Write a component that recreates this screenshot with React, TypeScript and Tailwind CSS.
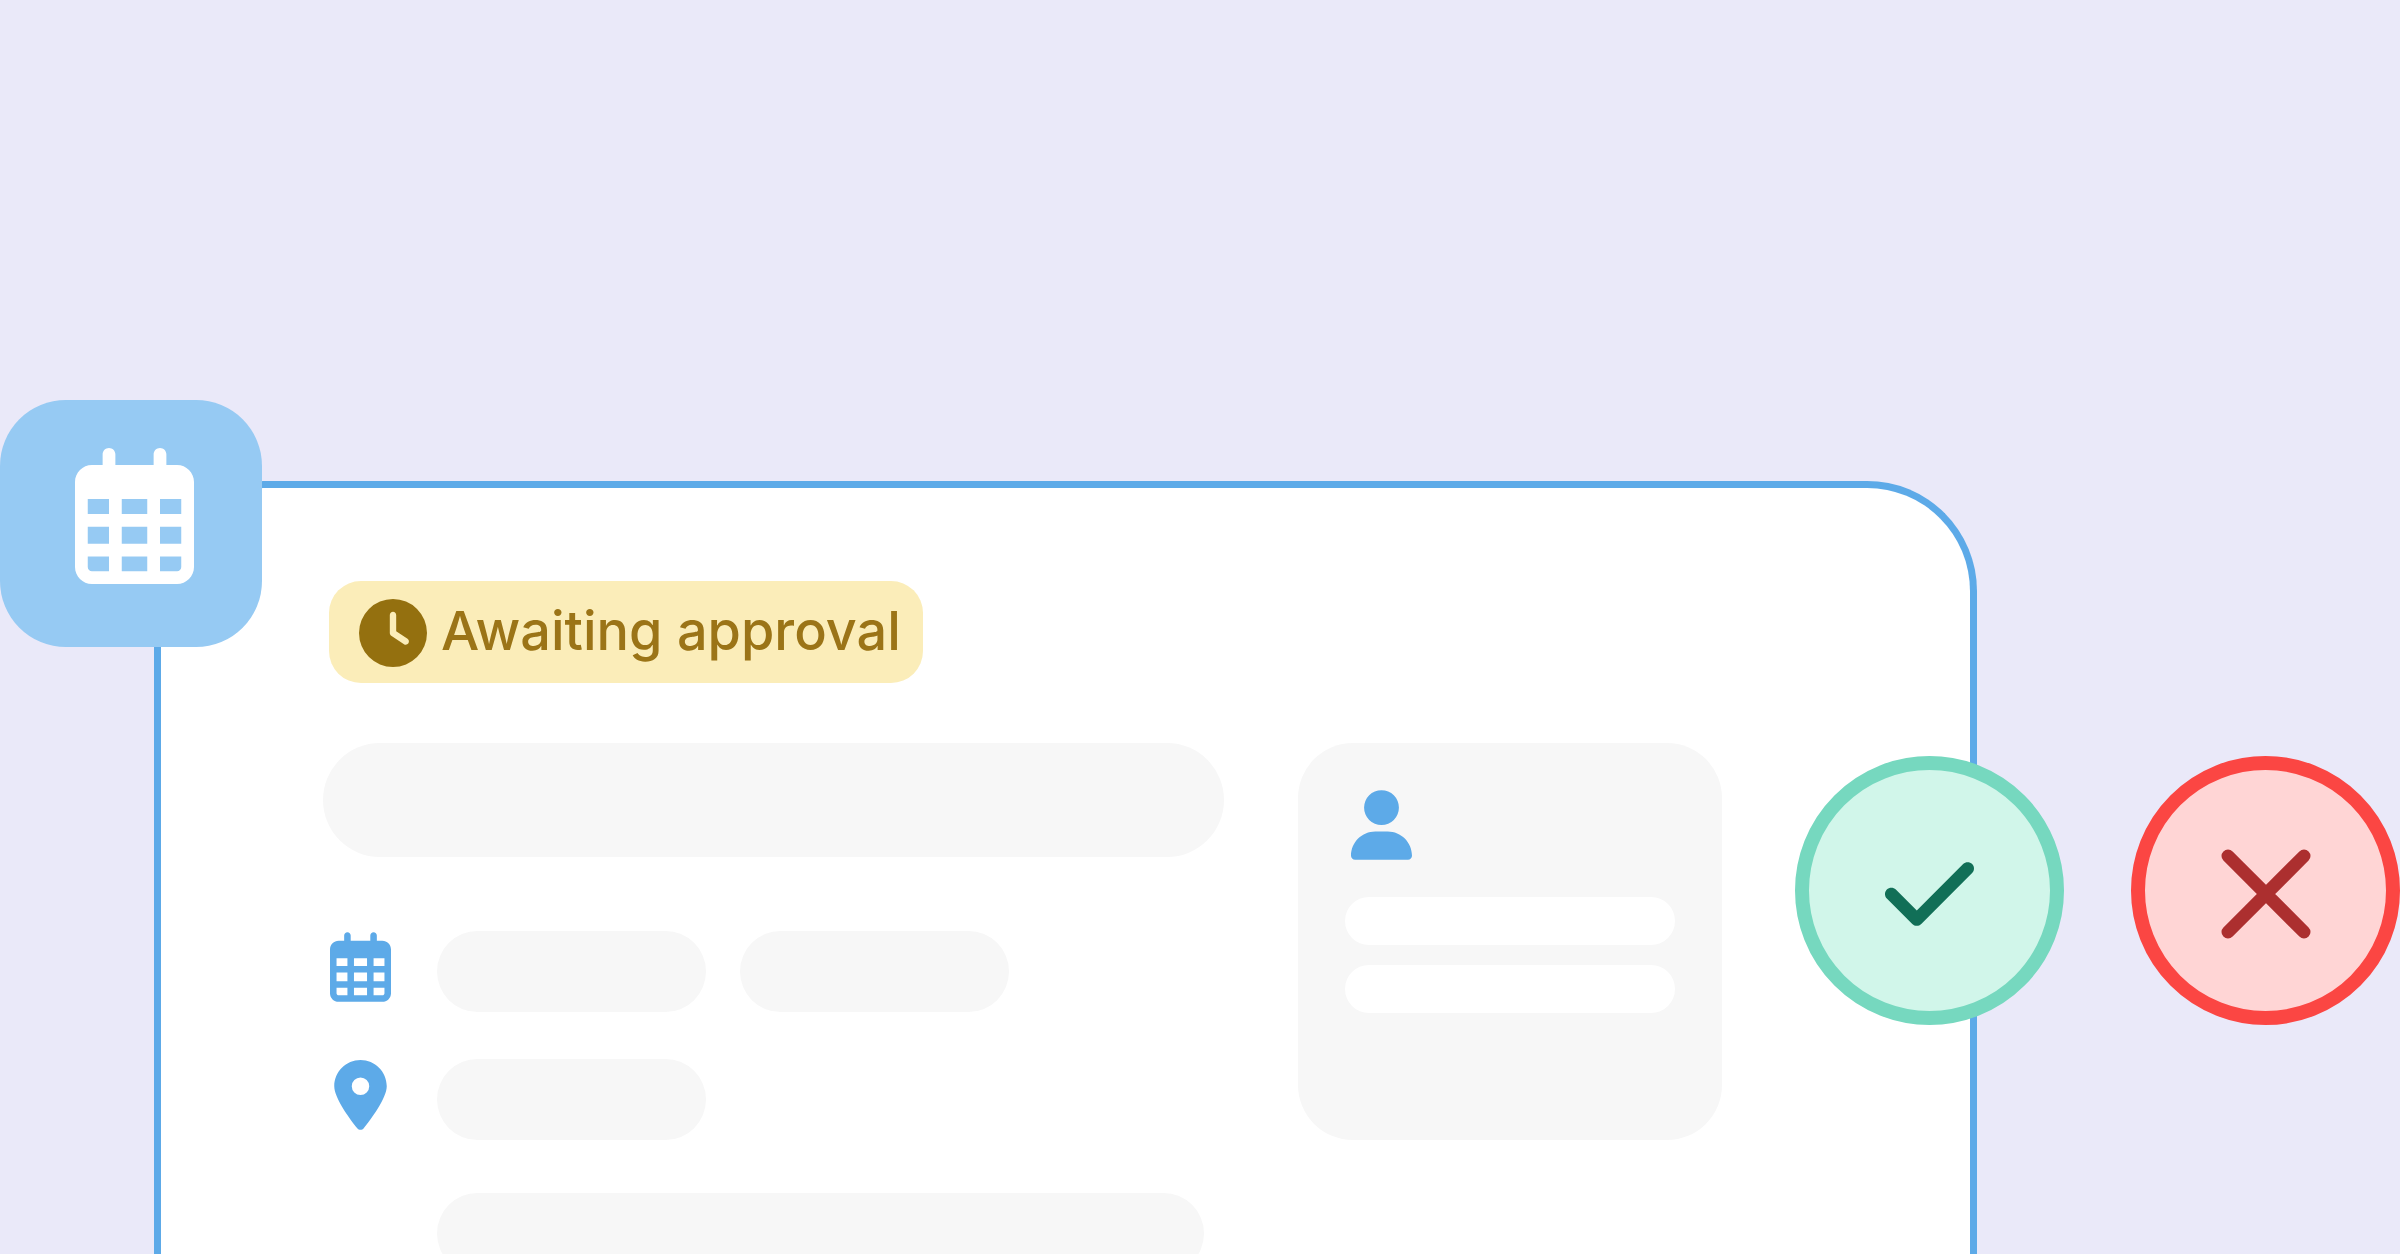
import { FaCheck, FaClock, FaLocationDot, FaRegCalendarDays, FaUser } from 'react-icons/fa6';

const details = [
  {
    label: 'Date',
    icon: FaRegCalendarDays,
    pills: ['w-[269px]', 'w-[269px]'],
  },
  {
    label: 'Location',
    icon: FaLocationDot,
    pills: ['w-[269px]'],
  },
];

function CloseIcon() {
  return (
    <svg
      viewBox="0 0 92 92"
      className="size-[92px]"
      fill="none"
      stroke="currentColor"
      strokeWidth="13"
      strokeLinecap="round"
      aria-hidden="true"
    >
      <path d="M8 8L84 84M84 8L8 84" />
    </svg>
  );
}

function StatusBadge() {
  return (
    <div className="ml-1.5 inline-flex h-[102px] items-center gap-3.5 rounded-[32px] bg-[#fbedb9] pt-0.5 pr-[22px] pl-[30px]">
      <FaClock className="size-[68px] text-[#94700f]" />
      <span className="pb-1 text-[54px] leading-[68px] font-medium whitespace-nowrap text-[#9b7417]">
        Awaiting approval
      </span>
    </div>
  );
}

function PersonCard() {
  return (
    <aside className="h-[397px] w-[424px] shrink-0 rounded-[55px] bg-[#f7f7f7] px-[47px] pt-[47px]">
      <FaUser className="ml-1.5 h-[70px] w-[61px] text-[#5daae8]" />
      <div className="mt-[37px] flex flex-col gap-5">
        <div className="h-12 rounded-full bg-white"></div>
        <div className="h-12 rounded-full bg-white"></div>
      </div>
    </aside>
  );
}

export default function App() {
  return (
    <main className="relative flex h-screen flex-col overflow-hidden bg-[#eae9f9] pt-[481px] pr-[423px] pl-[154px] font-[Inter,sans-serif]">
      <section className="flex-1 rounded-t-[110px] border-[7px] border-b-0 border-[#5daae8] bg-white pt-[93px] pr-[248px] pl-[162px]">
        <StatusBadge />

        <div className="mt-[60px] flex gap-[74px]">
          <div className="flex-1">
            <div className="h-[114px] rounded-full bg-[#f7f7f7]"></div>

            <div className="mt-[74px] flex flex-col gap-[47px]">
              {details.map((detail) => (
                <div key={detail.label} className="flex h-[81px]">
                  <div className="flex w-[114px] shrink-0 pt-px pl-[7px]">
                    <detail.icon className="h-[70px] w-[61px] text-[#5daae8]" />
                  </div>
                  <div className="flex gap-[34px]">
                    {detail.pills.map((width, index) => (
                      <div key={index} className={`h-full rounded-full bg-[#f7f7f7] ${width}`}></div>
                    ))}
                  </div>
                </div>
              ))}
            </div>

            <div className="mt-[53px] mr-5 ml-[114px] h-[81px] rounded-full bg-[#f7f7f7]"></div>
          </div>

          <PersonCard />
        </div>
      </section>

      {/* Calendar tile over the card's top left corner */}
      <div className="absolute top-[400px] left-0 flex h-[247px] w-[262px] items-center justify-center rounded-[66px] bg-[#96caf3] pb-4 pl-1.5">
        <FaRegCalendarDays className="h-[136px] w-[119px] text-white" />
      </div>

      {/* Approve and decline */}
      <div className="absolute top-[756px] right-0 flex gap-[67px]">
        <button
          type="button"
          aria-label="Approve"
          className="flex size-[269px] items-center justify-center rounded-full border-14 border-[#76d8bf] bg-[#d1f6ea] pt-1.5 text-[#116f57]"
        >
          <FaCheck className="h-[102px] w-[89px]" />
        </button>
        <button
          type="button"
          aria-label="Decline"
          className="flex size-[269px] items-center justify-center rounded-full border-14 border-[#fb4643] bg-[#ffd5d5] pt-1.5 text-[#ac2f2f]"
        >
          <CloseIcon />
        </button>
      </div>
    </main>
  );
}
